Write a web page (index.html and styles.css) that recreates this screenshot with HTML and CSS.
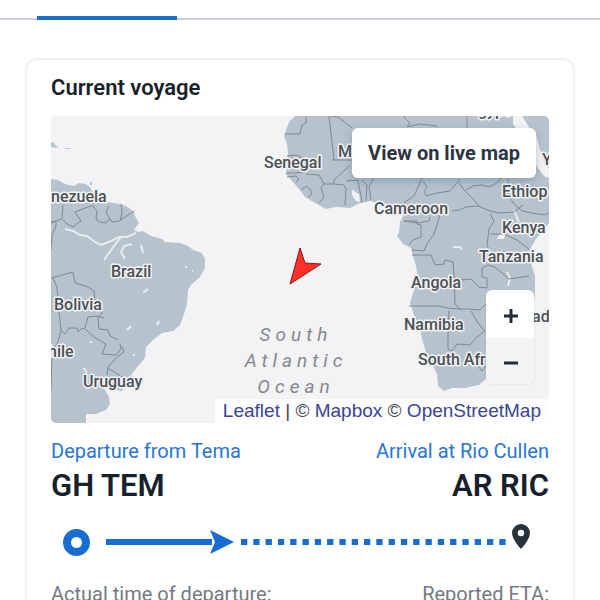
FILE: index.html
```html
<!DOCTYPE html>
<html lang="en">
<head>
<meta charset="utf-8">
<meta name="viewport" content="width=device-width, initial-scale=1">
<title>Current voyage</title>
<link rel="stylesheet" href="styles.css">
</head>
<body>
<div class="tabs"><div class="tab-active"></div></div>
<main class="card">
  <h2 class="card-title">Current voyage</h2>
  <section class="map">
    <svg class="map-canvas" viewBox="51 116 498 307" preserveAspectRatio="xMidYMid slice" role="img" aria-label="Vessel position in the South Atlantic Ocean">
      <g class="land">
        <path d="M51 179L58 180 65 184 74 186 79 183 86 184 90 187 92 191 101 195 108 202 120 204 126 206 133 211 136 218 139 223 134 230 138 232 143 231 151 236 162 239 165 242 180 243 188 246 193 250 202 253 205 259 205 268 200 277 191 285 188 290 187 304 184 314 180 325 173 331 162 333 153 340 146 347 145 358 138 366 132 374 128 382 122 391 104 388 109 397 110 404 106 410 96 414 86 414V423H51Z"/>
        <path d="M295 116L289 122 286 130 284 136 287 144 288 154 287 165 286 174 292 181 299 189 305 197 315 203 326 209 336 207 350 208 360 203 371 201 382 205 393 207 401 205 404 214 400 222 399 232 397 236 403 244 411 248 413 256 416 266 418 279 414 290 410 303 414 315 420 328 422 339 426 352 432 364 437 374 438 386 444 391 452 388 465 388 479 385 488 377 496 370 504 358 511 346 514 330 518 315 530 305 535 296 535 276 530 260 529 251 536 239 549 223V116Z"/>
        <path d="M51 142l3 1 2 3 3 1-3 1-5-1zM65 148h5v1h-5zM90 182h2v3h-2z"/>
      </g>
      <path class="water" d="M513 116H522L529 127 537 137 540 150 545 163 549 169V178L544 176 537 167 532 150 521 135 513 124ZM496 240l5-7 5-2-2 8h-8zM352 190l7 4 1 8-4-1-4-6z"/>
      <path class="rivers" d="M65 229l8 2 7 4 7 1 8 6 6 3 10-4 8-4 8 0 9-4M121 237l-7 9-10 14M132 244l-8 2-3 6 4 7M141 245l2 8M143 293l5-4M157 325l2-4M127 330l4-4M185 267h2M192 271h1M90 342h2M133 355h2M84 368l3 5M453 247h7l2 2M507 272l3 6-2 8M514 210l3 8 2 4"/>
      <g class="borders">
        <path d="M63 205l-1 14-11 4M63 220l4 4 6 3 5-4 3-2-6-9 18-7M93 206l4 5-1 8 4 3 5 1 5-4-4-7 3-6M110 219l2 3 8-1 2-8-1-9M120 220l7-4 7-5M51 222l5-1v5l-4 9-1 15M51 278l4-1 18-5 2 11 13 4 6 4 1 11 5 8 2 3-4 5 1 11 9 1 2 6 8 4M53 278l4 9 2 25 2 18-3 12-6 10-1 38M61 330l4 4 4-6h8l1 4 3-3 4-1 3-11 9-1 7 2M85 329l9 8 12 7-4 10 14 1 5-6-1-5M122 347l2 5-7 5-9 10-1 8M108 368l14 9"/>
        <path d="M306 116v7l-4 2-2 9h-15M329 116l5 44M332 160h24M331 116l7 1 14 11M287 156l10-1 8 5M286 173h9l11-1M287 177l9-1 3 3-3 3M306 174l13 1 5 9-3 3 3 10-5 6M301 190l5-4 4 3 2 5-4 3M324 184l9 0 2-5 9-8 6-6M334 184l10 1 2 4-1 16M346 181l12-1 4 23M362 180l5 5-1 16M373 179l-4 8 2 13M403 116l7 7-3 4 13-3 17 2M467 116v14"/>
        <path d="M422 178l-4 9-4 9-9 6-4 5M423 181l4 6-3 5 3 4M426 196l11-3 13-2 10-12M459 183l6 8 8 8 7 8M466 190l7-4 9-1 7 2 6-3 5-4 3-8M508 178l1 18 5 8 8 7 10 2 13 2 7-4M452 211l7-1 7-3 12-1 12 5 10 2 14-1 9-7M440 215l-6 19-7 10-3 7-12-1M430 217l-1 4-11 2-14-2M404 221h13v3l4 1v12l-8 3-4 5M490 214l4 7-5 8-2 16 3 7M490 234l14 0 13 6 13 10M412 255h19l4 10 9-1 1-4 8 2 1 14 1 28 6 6M453 277l10 3 8-1 8 8 8 1v-10l-5-1v-9l6-3 7 2 7 6 7 6 20-3"/>
        <path d="M409 306h30l8 2 12 1 9 0 12 1 9-9M449 311l-1 21v17l4 2 5-7 13 1 6-7 9-7-7-8-7-12M478 366l4 5 4-5"/>
      </g>
      <g class="places">
        <text x="51" y="202">nezuela</text>
        <text x="111" y="277">Brazil</text>
        <text x="54" y="310">Bolivia</text>
        <text x="48" y="357">hile</text>
        <text x="83" y="387">Uruguay</text>
        <text x="264" y="168">Senegal</text>
        <text x="338" y="157">M</text>
        <text x="478" y="116">gypt</text>
        <text x="542" y="165">Y</text>
        <text x="502" y="197">Ethiop</text>
        <text x="374" y="214">Cameroon</text>
        <text x="502" y="233">Kenya</text>
        <text x="479" y="262">Tanzania</text>
        <text x="411" y="288">Angola</text>
        <text x="404" y="330">Namibia</text>
        <text x="418" y="365">South Afr</text>
        <text x="532" y="322">ad</text>
      </g>
      <g class="ocean">
        <text x="296" y="341">South</text>
        <text x="296" y="367">Atlantic</text>
        <text x="296" y="393">Ocean</text>
      </g>
      <path class="vessel" d="M300 248L305 263 321 264 290 284Z"/>
    </svg>
    <button class="live-button" type="button">View on live map</button>
    <div class="zoom">
      <button type="button" aria-label="Zoom in"><svg viewBox="0 0 16 16"><path d="M8 1v14M1 8h14"/></svg></button>
      <button type="button" aria-label="Zoom out"><svg viewBox="0 0 16 16"><path d="M1 8h14"/></svg></button>
    </div>
    <div class="attribution"><a href="#leaflet">Leaflet</a> | © <a href="#mapbox">Mapbox</a> © <a href="#osm">OpenStreetMap</a></div>
  </section>
  <section class="ports">
    <div class="port">
      <a class="port-link" href="#tema">Departure from Tema</a>
      <div class="port-code">GH TEM</div>
    </div>
    <div class="port port-end">
      <a class="port-link" href="#rio-cullen">Arrival at Rio Cullen</a>
      <div class="port-code">AR RIC</div>
    </div>
  </section>
  <div class="progress">
    <span class="origin"></span>
    <span class="travelled"></span>
    <svg class="arrow" viewBox="0 0 24 24"><path d="M0 0L24 12 0 24 5 12Z"/></svg>
    <svg class="remaining" viewBox="0 0 265 6" preserveAspectRatio="none"><path d="M0 3H265"/></svg>
    <svg class="pin" viewBox="0 0 18 25"><path fill-rule="evenodd" d="M9 0a9 9 0 0 0-9 9c0 6.500 9 16 9 16s9-9.500 9-16a9 9 0 0 0-9-9zm0 5.800a3.200 3.200 0 1 1 0 6.400 3.200 3.200 0 0 1 0-6.400z"/></svg>
  </div>
  <div class="times"><span>Actual time of departure:</span><span>Reported ETA:</span></div>
</main>
</body>
</html>
```
FILE: styles.css
```css
* { box-sizing: border-box; }
body {
  margin: 0;
  background: #fff;
  color: #17212b;
  font-family: Roboto, "Liberation Sans", sans-serif;
}
.tabs {
  display: flex;
  align-items: flex-end;
  height: 20px;
  padding-left: 37px;
  border-bottom: 2px solid #ccccdc;
}
.tab-active {
  width: 140px;
  height: 4px;
  margin-bottom: -2px;
  background: #1b6ccc;
}
.card {
  margin: 38px 25px 0;
  padding: 16px 24px 0;
  border: 2px solid #f1f1f2;
  border-bottom: 0;
  border-radius: 12px 12px 0 0;
}
.card-title {
  margin: 0 0 16px;
  font-size: 22px;
  line-height: 24px;
  font-weight: 600;
}
.map {
  position: relative;
  aspect-ratio: 498 / 307;
  overflow: hidden;
  border-radius: 5px;
  background: #f3f3f5;
}
.map-canvas { display: block; width: 100%; height: 100%; }
.land { fill: #b6c3cd; }
.water { fill: #f3f3f5; }
.rivers { fill: none; stroke: #e6edf2; stroke-width: 2; }
.borders { fill: none; stroke: #7d8891; stroke-width: 1; stroke-linejoin: round; }
.places {
  font-size: 16px;
  font-weight: 500;
  fill: #4c5054;
  stroke: #f2f4f6;
  stroke-width: 3px;
  stroke-linejoin: round;
  paint-order: stroke;
}
.ocean {
  font-size: 19px;
  font-style: italic;
  letter-spacing: 5px;
  text-anchor: middle;
  fill: #85878c;
}
.vessel { fill: #fb3028; stroke: #8d1614; stroke-width: 1; }
.live-button {
  position: absolute;
  top: 12px;
  right: 13px;
  height: 50px;
  padding: 0 16px;
  border: 0;
  border-radius: 6px;
  background: #fff;
  box-shadow: 0 3px 8px #465a7855;
  color: #2c3441;
  font: 700 20px Roboto, sans-serif;
}
.zoom {
  position: absolute;
  right: 15px;
  bottom: 39px;
  width: 48px;
  overflow: hidden;
  border-radius: 6px;
  box-shadow: 0 0 2px #46506433;
}
.zoom button {
  display: grid;
  place-items: center;
  width: 100%;
  height: 48px;
  padding: 4px 0 0 2px;
  border: 0;
  background: #fff;
}
.zoom button + button { height: 46px; background: #f4f4f5; }
.zoom svg { width: 16px; height: 16px; fill: none; stroke: #222a33; stroke-width: 3; }
.attribution {
  position: absolute;
  right: 0;
  bottom: 0;
  padding: 0 8px;
  background: #ffffffcc;
  color: #44464b;
  font: 19px/24px "Liberation Sans", sans-serif;
  white-space: nowrap;
}
.attribution a { color: #3b4590; text-decoration: none; }
.ports {
  display: flex;
  justify-content: space-between;
  margin-top: 16px;
}
.port-end { text-align: right; }
.port-link {
  display: block;
  color: #2876d2;
  font-size: 20px;
  line-height: 24px;
  text-decoration: none;
}
.port-code {
  margin-top: 5px;
  font-size: 31px;
  line-height: 36px;
  font-weight: 600;
}
.progress {
  display: flex;
  align-items: center;
  height: 28px;
  margin: 24px 19px 0 12px;
}
.origin {
  width: 27px;
  height: 27px;
  border: 8px solid #176dd2;
  border-radius: 50%;
}
.travelled {
  flex: 106;
  height: 6px;
  margin-left: 16px;
  background: #176dd2;
}
.arrow { width: 24px; height: 24px; fill: #176dd2; margin-left: -2px; }
.remaining {
  flex: 265;
  min-width: 0;
  height: 6px;
  margin: 0 6px 0 7px;
  fill: none;
  stroke: #176dd2;
  stroke-width: 6;
  stroke-dasharray: 6.3 6;
}
.pin { width: 18px; height: 25px; margin-bottom: 12px; fill: #28323b; }
.times {
  display: flex;
  justify-content: space-between;
  margin-top: 26px;
  color: #737982;
  font-size: 20px;
  line-height: 24px;
}
```
